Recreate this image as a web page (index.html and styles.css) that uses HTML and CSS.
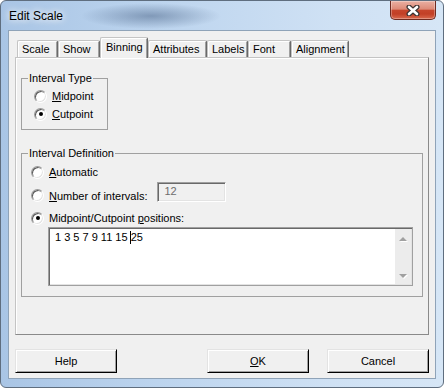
FILE: index.html
```html
<!DOCTYPE html>
<html lang="en">
<head>
    <meta charset="UTF-8">
    <title>Edit Scale</title>
    <link rel="stylesheet" href="styles.css">
</head>
<body>
    <div class="window">
        <div class="titlebar">
            <span class="title">Edit Scale</span>
            <div class="close">
                <svg width="14" height="11" viewBox="0 0 14 11">
                    <path d="M3 2 L11 9 M11 2 L3 9" stroke="#3d3434" stroke-width="5" stroke-linecap="round"/>
                    <path d="M3 2 L11 9 M11 2 L3 9" stroke="#fff" stroke-width="2.6" stroke-linecap="round"/>
                </svg>
            </div>
        </div>
        <div class="client">
            <div class="tabs">
                <div class="tab t-scale">Scale</div>
                <div class="tab t-show">Show</div>
                <div class="tab t-binning sel">Binning</div>
                <div class="tab t-attr">Attributes</div>
                <div class="tab t-labels">Labels</div>
                <div class="tab t-font">Font</div>
                <div class="tab t-align">Alignment</div>
            </div>
            <div class="panel">
                <fieldset class="group type">
                    <legend>Interval Type</legend>
                    <div class="opt"><span class="radio"></span><span><u>M</u>idpoint</span></div>
                    <div class="opt"><span class="radio on"></span><span><u>C</u>utpoint</span></div>
                </fieldset>
                <fieldset class="group def">
                    <legend>Interval Definition</legend>
                    <div class="opt r1"><span class="radio"></span><span><u>A</u>utomatic</span></div>
                    <div class="opt r2">
                        <span class="radio"></span><span><u>N</u>umber of intervals:</span>
                        <div class="num">12</div>
                    </div>
                    <div class="opt r3"><span class="radio on"></span><span>Midpoint/Cutpoint <u>p</u>ositions:</span></div>
                    <div class="memo">
                        <div class="memo-text">1 3 5 7 9 11 15 <span class="caret"></span>25</div>
                        <div class="vscroll">
                            <span class="arr-up"></span>
                            <span class="arr-down"></span>
                        </div>
                    </div>
                </fieldset>
            </div>
            <div class="buttons">
                <button class="btn" type="button">Help</button>
                <button class="btn push" type="button"><u>O</u>K</button>
                <button class="btn" type="button">Cancel</button>
            </div>
        </div>
    </div>
</body>
</html>
```

FILE: styles.css
```css
body {
    margin: 0;
    font-family: "Liberation Sans", Arial, sans-serif;
    font-size: 11px;
    color: #000;
    background: #fff;
}
.window {
    width: 444px;
    height: 388px;
    box-sizing: border-box;
    border: 1px solid #5f6e7f;
    border-radius: 6px;
    overflow: hidden;
    display: flex;
    flex-direction: column;
    background:
        radial-gradient(ellipse 70px 13px at 150px 15px, rgba(80,105,140,0.55), rgba(80,105,140,0) 100%),
        linear-gradient(90deg, #a9c5e5 0%, #bcd4ee 35%, #cfe1f4 75%, #d6e6f6 100%);
}
.titlebar {
    height: 29px;
    display: flex;
    justify-content: space-between;
    align-items: flex-start;
    padding: 0 7px 0 8px;
}
.title {
    font-size: 12px;
    line-height: 30px;
    text-shadow: 0 0 6px #fff, 0 0 10px rgba(255,255,255,0.9);
}
.close {
    width: 46px;
    height: 19px;
    box-sizing: border-box;
    border: 1px solid #6e2a20;
    border-top: none;
    border-radius: 0 0 5px 5px;
    background: linear-gradient(#eab0a3 0%, #dd8a77 45%, #c6452c 52%, #c23f26 72%, #d9694e 100%);
    box-shadow: inset 0 0 0 1px rgba(255,255,255,0.3);
    display: flex;
    align-items: center;
    justify-content: center;
}
.client {
    margin: 0 7px;
    height: 349px;
    box-sizing: border-box;
    border: 1px solid #8fa3b8;
    background: #f0f0f0;
    padding: 6px 6px 5px;
    display: flex;
    flex-direction: column;
}
.tabs {
    display: flex;
    align-items: flex-end;
    height: 20px;
    padding-left: 2px;
}
.tab {
    height: 17px;
    box-sizing: border-box;
    border: 1px solid;
    border-color: #c4c4c4 #696969 transparent #c4c4c4;
    border-bottom: none;
    border-radius: 2px 2px 0 0;
    box-shadow: inset 1px 1px #fff, inset -1px 0 #a0a0a0;
    padding-left: 4px;
    line-height: 16px;
    background: #f0f0f0;
}
.tab.sel {
    height: 21px;
    margin-bottom: -1px;
    line-height: 18px;
    padding-left: 5px;
    position: relative;
    z-index: 1;
}
.t-scale { width: 41px; }
.t-show { width: 42px; }
.t-binning { width: 48px; }
.t-attr { width: 59px; }
.t-labels { width: 41px; }
.t-font { width: 43px; }
.t-align { width: 58px; }
.panel {
    height: 278px;
    box-sizing: border-box;
    border: 1px solid;
    border-color: #c4c4c4 #8a8a8a #8a8a8a #c4c4c4;
    box-shadow: inset 1px 1px #fff;
}
.group {
    box-sizing: border-box;
    min-width: 0;
    margin: 14px 0 0 5px;
    padding: 2px 6px 6px;
    border: 1px solid #a0a0a0;
}
.group legend {
    padding: 0 1px;
    line-height: 13px;
}
.type {
    width: 87px;
}
.def {
    width: 402px;
    margin-top: 17px;
    padding-bottom: 10px;
}
.opt {
    display: flex;
    align-items: center;
    gap: 5px;
    height: 18px;
    padding-left: 6px;
}
.def .opt {
    padding-left: 3px;
}
.def .r1 { height: 20px; }
.def .r2 { height: 27px; }
.def .r3 { height: 18px; }
.radio {
    flex: none;
    width: 13px;
    height: 13px;
    box-sizing: border-box;
    border-radius: 50%;
    border: 1px solid;
    border-color: #9a9a9a #fff #fff #9a9a9a;
    box-shadow: inset 1px 1px #5a5a5a, inset -1px -1px #e3e3e3;
    background: #fff;
    display: flex;
    align-items: center;
    justify-content: center;
}
.radio.on::after {
    content: "";
    width: 4px;
    height: 4px;
    border-radius: 50%;
    background: #000;
}
.num {
    align-self: flex-start;
    margin-left: 5px;
    width: 69px;
    height: 20px;
    box-sizing: border-box;
    border: 1px solid;
    border-color: #a0a0a0 #fff #fff #a0a0a0;
    box-shadow: inset 1px 1px #696969, inset -1px -1px #e3e3e3;
    background: #f0f0f0;
    color: #6d6d6d;
    padding-left: 6px;
    line-height: 17px;
}
.memo {
    margin-left: 20px;
    width: 365px;
    height: 59px;
    box-sizing: border-box;
    border: 1px solid #a0a0a0;
    box-shadow: inset 1px 1px #696969, inset -1px -1px #e3e3e3;
    background: #fff;
    display: flex;
}
.memo-text {
    flex: 1;
    padding: 3px 0 0 6px;
    line-height: 13px;
}
.caret {
    display: inline-block;
    width: 1px;
    height: 13px;
    background: #000;
    vertical-align: top;
    margin-left: -1px;
}
.vscroll {
    width: 16px;
    margin: 1px 1px 1px 0;
    box-sizing: border-box;
    padding: 8px 0 6px;
    background: #ececec;
    display: flex;
    flex-direction: column;
    justify-content: space-between;
    align-items: center;
}
.arr-up, .arr-down {
    width: 0;
    height: 0;
    border-left: 4px solid transparent;
    border-right: 4px solid transparent;
    filter: drop-shadow(1px 1px 0 #fff);
}
.arr-up {
    border-bottom: 4px solid #a0a0a0;
}
.arr-down {
    border-top: 4px solid #a0a0a0;
}
.buttons {
    display: flex;
    gap: 18px;
    margin-top: 14px;
}
.btn {
    width: 102px;
    height: 24px;
    padding: 0;
    font: inherit;
    color: #000;
    background: #f0f0f0;
    border: 1px solid;
    border-color: #e3e3e3 #000 #000 #e3e3e3;
    box-shadow: inset 1px 1px #fff, inset -1px -1px #a0a0a0;
}
.push {
    margin-left: auto;
}
```
